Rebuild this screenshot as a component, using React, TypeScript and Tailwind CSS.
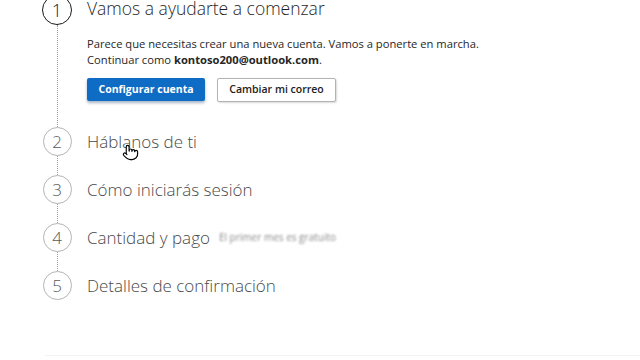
import React from 'react';
import { Pointer } from 'lucide-react';

const font = { fontFamily: '"Open Sans", "Noto Sans", sans-serif' };

const steps = [
  { n: 2, title: 'Háblanos de ti' },
  { n: 3, title: 'Cómo iniciarás sesión' },
  { n: 4, title: 'Cantidad y pago', note: 'El primer mes es gratuito' },
  { n: 5, title: 'Detalles de confirmación' },
];

const App = () => {
  return (
    <div className="w-[640px] h-[360px] bg-white overflow-hidden relative" style={font}>
      <div className="pl-[42px] -mt-[5px]">
        {/* step 1, active */}
        <div className="flex">
          <div className="flex flex-col items-center w-[30px]">
            <div className="w-[30px] h-[30px] rounded-full border-[1.5px] border-[#1a1a1a] flex items-center justify-center text-[18px] text-[#1a1a1a] font-light leading-none">
              1
            </div>
            <div className="flex-1 border-l border-dotted border-[#9a9a9a]" />
          </div>
          <div className="ml-[15px] flex-1 pb-[25px]">
            <div className="h-[26px] flex items-center text-[17.5px] font-light text-[#1f1f1f]">
              Vamos a ayudarte a comenzar
            </div>
            <p className="mt-[15px] text-[11.2px] leading-[16px] text-[#262626]">
              Parece que necesitas crear una nueva cuenta. Vamos a ponerte en marcha.
              <br />
              Continuar como <span className="font-bold">kontoso200@outlook.com</span>.
            </p>
            <div className="mt-[10px] flex gap-[12px]">
              <button className="w-[118px] h-[23px] bg-[#0f6cc4] text-white text-[10.5px] font-bold rounded-[2px] shadow-[0_2px_3px_rgba(0,40,90,0.35)]">
                Configurar cuenta
              </button>
              <button className="w-[119px] h-[24px] bg-white border border-[#b3b3b3] text-[#222] text-[10.5px] font-semibold rounded-[2px] shadow-[1px_1px_2px_rgba(0,0,0,0.15)]">
                Cambiar mi correo
              </button>
            </div>
          </div>
        </div>

        {steps.map((s, i) => (
          <div key={s.n} className="flex relative">
            <div className="flex flex-col items-center w-[30px]">
              <div className="w-[29px] h-[29px] rounded-full border-[1.5px] border-[#b4b4b4] flex items-center justify-center text-[17px] text-[#5a5a5a] font-light leading-none">
                {s.n}
              </div>
              {i < steps.length - 1 && <div className="h-[19px] border-l border-dotted border-[#a0a0a0]" />}
            </div>
            <div className="ml-[15px] h-[29px] flex items-center gap-[9px]">
              <span className="text-[17px] font-light text-[#4a4a4a]">{s.title}</span>
              {s.note && (
                <span className="text-[10px] text-[#8a8a8a] blur-[1.2px]">{s.note}</span>
              )}
            </div>
            {s.n === 2 && (
              <Pointer
                size={17}
                strokeWidth={1.6}
                className="absolute left-[80px] top-[17px] text-black fill-white"
              />
            )}
          </div>
        ))}
      </div>
      <div className="absolute left-[45px] right-0 bottom-[4px] border-t border-[#f4f4f4]" />
    </div>
  );
};

export default App;
